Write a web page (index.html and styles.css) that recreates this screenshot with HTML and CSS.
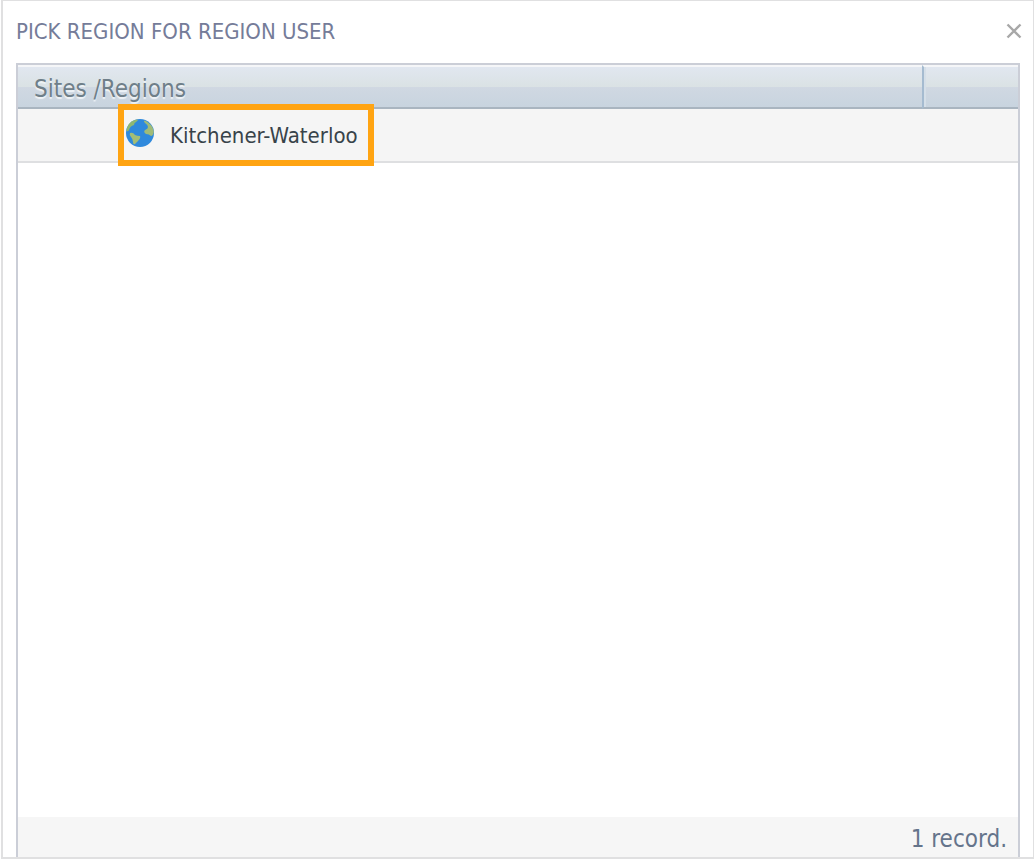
FILE: index.html
```html
<!DOCTYPE html>
<html lang="en">
  <head>
    <meta charset="utf-8" />
    <title>Pick Region</title>
    <link rel="stylesheet" href="styles.css">
  </head>
  <body>
    <div class="dialog">
      <div class="titlebar">
        <h1 class="title">PICK REGION FOR REGION USER</h1>
        <button class="close" type="button" aria-label="Close">
          <svg width="16" height="16" viewBox="0 0 16 16">
            <path d="M1.5 1.5L14.5 14.5M14.5 1.5L1.5 14.5" stroke="#a8a8a8" stroke-width="2.4" />
          </svg>
        </button>
      </div>
      <div class="grid">
        <table class="regions">
          <thead>
            <tr>
              <th>Sites /Regions</th>
              <th class="last" aria-label="Actions"></th>
            </tr>
          </thead>
          <tbody>
            <tr>
              <td colspan="2">
                <button class="region" type="button">
                  <svg class="globe" width="30" height="30" viewBox="0 0 30 30">
                    <circle cx="15" cy="15" r="14" fill="#2f89dc" />
                    <path d="M1.5 13C2 7 6 2 12 1.500Q14 2 11 4Q9 5 9 7Q5 8 4 12Q3 14 1.500 13Z" fill="#8fb872" />
                    <path d="M20 2.500C25 5 28.500 9 28.800 14Q28 18 26 18Q24 16 21 16Q18 14 20 12Q23 11 23 9Q23 7 20 5Q18 3 20 2.500Z" fill="#a0bb78" />
                    <path d="M5 15Q8 14 10 17Q12 18 15 18Q16 20 13 23Q11 25 10 26Q8 27 8 24Q8 21 6 19Q4 17 5 15Z" fill="#a3bd76" />
                  </svg>
                  <span>Kitchener-Waterloo</span>
                </button>
              </td>
            </tr>
          </tbody>
        </table>
        <div class="footer">1 record.</div>
      </div>
    </div>
  </body>
</html>
```
FILE: styles.css
```css
body {
  margin: 0;
  background-color: white;
  font-family: Tahoma, "DejaVu Sans Condensed", "DejaVu Sans", sans-serif;
}
button {
  font: inherit;
  background: none;
  border: none;
  padding: 0;
  cursor: pointer;
}
.dialog {
  display: flex;
  flex-direction: column;
  box-sizing: border-box;
  height: calc(100vh - 1px);
  margin-left: 1px;
  border: 2px solid #e0e0e1;
  border-top-width: 1px;
  border-right-width: 1px;
}
.titlebar {
  display: flex;
  align-items: center;
  justify-content: space-between;
  height: 62px;
  padding: 0 11px 2px 13px;
  box-sizing: border-box;
}
.title {
  margin: 0;
  font-size: 22px;
  font-weight: normal;
  color: #757c99;
}
.close {
  display: flex;
}
.grid {
  display: flex;
  flex-direction: column;
  justify-content: space-between;
  flex: 1;
  margin: 0 13px;
  border: 2px solid #cbced7;
  border-bottom: none;
}
.regions {
  width: 100%;
  border-spacing: 0;
  table-layout: fixed;
}
.regions th {
  height: 36px;
  padding: 4px 16px 0;
  border-top: 2px solid #f5f6f8;
  border-bottom: 2px solid #a9b5c0;
  background: linear-gradient(#e1e7f0, #dae2e4 50%, #d0d8e2 50%, #c8d4df);
  font-size: 24px;
  line-height: 36px;
  font-weight: normal;
  text-align: left;
  color: #6f7f89;
  text-shadow: 0 2px 1px #f0f4f7;
}
.regions .last {
  width: 62px;
  border-left: 2px solid #a5bbd0;
  box-shadow: inset 2px 0 #d5dfe8;
}
.regions td {
  padding: 1px 106px;
  background-color: #f5f5f5;
  border-bottom: 2px solid #dedfe1;
}
/* picked region */
.region {
  display: flex;
  align-items: center;
  gap: 15px;
  height: 50px;
  padding: 0 10px 0 1px;
  outline: 6px solid #ffa412;
  font-size: 22px;
  color: #38434a;
}
.globe {
  margin-bottom: 4px;
}
.footer {
  height: 40px;
  padding: 0 11px;
  background-color: #f6f6f6;
  font-size: 24px;
  line-height: 44px;
  text-align: right;
  color: #65748b;
}
```
